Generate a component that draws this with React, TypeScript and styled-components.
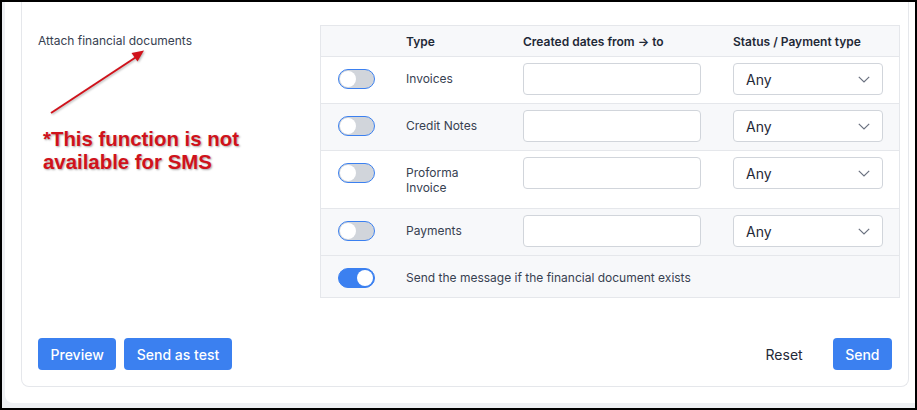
import React from "react";
import styled, { createGlobalStyle } from "styled-components";

const Global = createGlobalStyle`
  html, body { margin: 0; padding: 0; background: #fff; }
  body { font-family: Inter, "Noto Sans", sans-serif; }
  * { box-sizing: border-box; }
`;

const Frame = styled.div`
  position: relative;
  width: 917px;
  height: 410px;
  border: 2px solid #000;
  background: #eef0f3;
  padding: 0 0 5px 3px;
  display: flex;
  overflow: hidden;
`;

const Panel = styled.div`
  flex: 1;
  display: flex;
  flex-direction: column;
  background: #fff;
  border-bottom-left-radius: 8px;
  padding: 0 6px 16px 16px;
`;

const Card = styled.div`
  flex: 1;
  display: flex;
  flex-direction: column;
  border: 1px solid #e5e7eb;
  border-top: none;
  border-radius: 0 0 8px 8px;
  padding: 23px 8px 16px 16px;
`;

const Section = styled.div`
  display: grid;
  grid-template-columns: 282px 1fr;
`;

const SectionLabel = styled.div`
  padding-top: 8px;
  font-size: 12px;
  line-height: 15px;
  color: #374151;
`;

const Table = styled.div`
  border: 1px solid #e5e7eb;
  display: flex;
  flex-direction: column;
`;

const Row = styled.div<{ $shade?: boolean; $span?: boolean }>`
  display: grid;
  grid-template-columns: ${(p) => (p.$span ? "85px 1fr" : "85px 117px 210px 1fr")};
  align-items: start;
  background: ${(p) => (p.$shade ? "#f7f8fa" : "#fff")};
  & + & {
    border-top: 1px solid #e5e7eb;
  }
`;

const HeaderCell = styled.div`
  padding: 8px 0 7px;
  font-size: 12px;
  line-height: 15px;
  font-weight: 600;
  color: #1f2937;
`;

const ToggleCell = styled.div`
  padding: 12px 0 0 17px;
`;

const TextCell = styled.div<{ $wide?: boolean }>`
  padding: 14px ${(p) => (p.$wide ? "8px" : "32px")} ${(p) => (p.$wide ? "12px" : "13px")} 0;
  font-size: 12px;
  line-height: 15px;
  color: #374151;
`;

const FieldCell = styled.div`
  padding: 6px 0 8px;
`;

const TextInput = styled.input`
  display: block;
  width: 178px;
  height: 32px;
  border: 1px solid #d1d5db;
  border-radius: 4px;
  background: #fff;
  outline: none;
`;

const SelectBox = styled.div`
  width: 150px;
  height: 32px;
  display: flex;
  align-items: center;
  justify-content: space-between;
  padding: 0 12px;
  border: 1px solid #d1d5db;
  border-radius: 4px;
  background: #fff;
  font-size: 14px;
  color: #1f2937;
`;

const Track = styled.span<{ $on?: boolean }>`
  position: relative;
  display: block;
  width: 37px;
  height: 20px;
  border-radius: 10px;
  border: 1.5px solid #3b80f0;
  background: ${(p) => (p.$on ? "#3b80f0" : "#d1d5db")};
`;

const Knob = styled.span<{ $on?: boolean }>`
  position: absolute;
  top: 0.5px;
  left: ${(p) => (p.$on ? "17.5px" : "0.5px")};
  width: 16px;
  height: 16px;
  border-radius: 50%;
  background: #fff;
`;

const Footer = styled.div`
  margin-top: auto;
  display: flex;
  align-items: center;
  gap: 8px;
  padding-right: 8px;
`;

const Spacer = styled.div`
  flex: 1;
`;

const PrimaryButton = styled.button`
  height: 32px;
  padding: 0 12.5px;
  border: none;
  border-radius: 4px;
  background: #3b80f0;
  color: #fff;
  font-family: Inter, "Noto Sans", sans-serif;
  font-size: 14px;
  font-weight: 500;
`;

const GhostButton = styled.button`
  height: 32px;
  padding: 0 16px;
  margin-right: 6px;
  border: none;
  background: transparent;
  color: #1f2937;
  font-family: Inter, "Noto Sans", sans-serif;
  font-size: 14px;
`;

const ArrowLayer = styled.svg`
  position: absolute;
  left: -2px;
  top: -2px;
  pointer-events: none;
  filter: drop-shadow(1px 1px 1px rgba(0, 0, 0, 0.3));
`;

const Note = styled.div`
  position: absolute;
  left: 41px;
  top: 126px;
  font-family: "Liberation Sans", Arial, sans-serif;
  font-weight: bold;
  font-size: 20.4px;
  line-height: 23px;
  color: #d0121b;
  text-shadow: 1px 1px 2px rgba(0, 0, 0, 0.35);
  white-space: nowrap;
`;

const Toggle = ({ on }: { on?: boolean }) => (
  <Track $on={on}>
    <Knob $on={on} />
  </Track>
);

const Chevron = () => (
  <svg width="12" height="7" viewBox="0 0 12 7" fill="none">
    <path d="M0.8 0.8 L6 6 L11.2 0.8" stroke="#6b7280" strokeWidth="1.2" />
  </svg>
);

const docs = [
  { name: "Invoices", shade: false },
  { name: "Credit Notes", shade: true },
  { name: "Proforma Invoice", shade: false },
  { name: "Payments", shade: true },
];

export default function App() {
  return (
    <>
      <Global />
      <Frame>
        <Panel>
          <Card>
            <Section>
              <SectionLabel>Attach financial documents</SectionLabel>
              <Table>
                <Row $shade>
                  <HeaderCell />
                  <HeaderCell>Type</HeaderCell>
                  <HeaderCell>Created dates from → to</HeaderCell>
                  <HeaderCell>Status / Payment type</HeaderCell>
                </Row>
                {docs.map((d) => (
                  <Row key={d.name} $shade={d.shade}>
                    <ToggleCell>
                      <Toggle />
                    </ToggleCell>
                    <TextCell>{d.name}</TextCell>
                    <FieldCell>
                      <TextInput />
                    </FieldCell>
                    <FieldCell>
                      <SelectBox>
                        <span>Any</span>
                        <Chevron />
                      </SelectBox>
                    </FieldCell>
                  </Row>
                ))}
                <Row $shade $span>
                  <ToggleCell>
                    <Toggle on />
                  </ToggleCell>
                  <TextCell $wide>Send the message if the financial document exists</TextCell>
                </Row>
              </Table>
            </Section>
            <Footer>
              <PrimaryButton>Preview</PrimaryButton>
              <PrimaryButton>Send as test</PrimaryButton>
              <Spacer />
              <GhostButton>Reset</GhostButton>
              <PrimaryButton>Send</PrimaryButton>
            </Footer>
          </Card>
        </Panel>
        <ArrowLayer width="917" height="410" viewBox="0 0 917 410">
          <line x1="51" y1="113" x2="137" y2="56.5" stroke="#d0121b" strokeWidth="2" />
          <polygon points="144,50.5 131.5,53 137.5,61.5" fill="#d0121b" />
        </ArrowLayer>
        <Note>
          *This function is not
          <br />
          available for SMS
        </Note>
      </Frame>
    </>
  );
}
